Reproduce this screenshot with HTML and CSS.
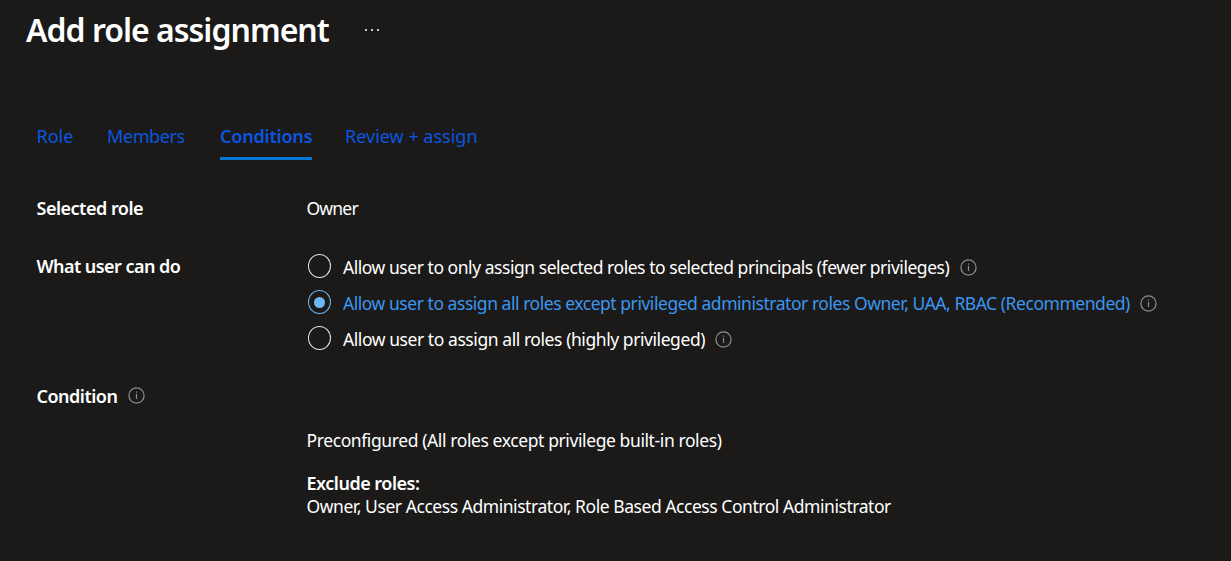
FILE: index.html
```html
<!DOCTYPE html>
<html lang="en">
<head>
<meta charset="utf-8">
<title>Add role assignment</title>
<link rel="stylesheet" href="styles.css">
</head>
<body>
<svg class="defs" width="0" height="0" aria-hidden="true">
  <symbol id="info" viewBox="0 0 17 17">
    <circle cx="8.5" cy="8.5" r="7.6" fill="none" stroke="currentColor" stroke-width="1.2"/>
    <path d="M7.9 7h1.2v5H7.9zM7.9 4.4h1.2v1.4H7.9z" fill="currentColor"/>
  </symbol>
</svg>
<header class="header">
  <h1 class="title">Add role assignment</h1>
  <svg class="more" viewBox="0 0 14 2"><path d="M0 0h2v2H0zM6 0h2v2H6zM12 0h2v2h-2z" fill="currentColor"/></svg>
</header>
<nav class="tabs">
  <a class="tab tab-role">Role</a>
  <a class="tab tab-members">Members</a>
  <a class="tab tab-active">Conditions</a>
  <a class="tab tab-review">Review + assign</a>
</nav>
<main class="form">
  <section class="row row-role">
    <h2 class="label label-role">Selected role</h2>
    <p class="value value-owner">Owner</p>
  </section>
  <section class="row row-options">
    <h2 class="label label-what">What user can do</h2>
    <div class="options">
      <div class="option">
        <span class="radio"></span>
        <span class="option-text text-one">Allow user to only assign selected roles to selected principals (fewer privileges)</span>
        <svg class="info"><use href="#info"/></svg>
      </div>
      <div class="option option-selected">
        <span class="radio"></span>
        <span class="option-text text-two">Allow user to assign all roles except privileged administrator roles Owner, UAA, RBAC (Recommended)</span>
        <svg class="info"><use href="#info"/></svg>
      </div>
      <div class="option">
        <span class="radio"></span>
        <span class="option-text text-three">Allow user to assign all roles (highly privileged)</span>
        <svg class="info"><use href="#info"/></svg>
      </div>
    </div>
  </section>
  <section class="condition">
    <h2 class="label label-condition">Condition</h2>
    <svg class="info"><use href="#info"/></svg>
  </section>
  <section class="details">
    <p class="value value-pre">Preconfigured (All roles except privilege built-in roles)</p>
    <h3 class="label label-exclude">Exclude roles:</h3>
    <p class="value value-roles">Owner, User Access Administrator, Role Based Access Control Administrator</p>
  </section>
</main>
</body>
</html>
```
FILE: styles.css
```css
* { box-sizing: border-box; }
body {
  margin: 0;
  height: 561px;
  overflow: hidden;
  background: #1b1a19;
  color: #fff;
  font: 18px/24px "Segoe UI", "Noto Sans", sans-serif;
  white-space: nowrap;
}
h1, h2, h3, p { margin: 0; font-size: inherit; }
.defs { position: absolute; }
.header { display: flex; height: 60px; padding: 9px 0 0 26px; }
.title { width: 303px; font-size: 32px; line-height: 42px; font-weight: 600; letter-spacing: -0.99px; }
.more { width: 14px; height: 2px; margin: 20px 0 0 36px; color: #d0d0d0; }
.tabs { display: flex; height: 100px; padding: 64px 0 0 36.5px; color: #0a56e0; }
.tab { height: 36px; letter-spacing: 0; }
.tab-role { width: 70.5px; }
.tab-members { width: 113px; letter-spacing: -0.4px; }
.tab-active { width: 92px; margin-right: 33px; font-weight: 600; border-bottom: 3px solid #0078d4; letter-spacing: -0.2px; }
.form { padding: 36px 0 0 36.5px; }
.row { display: grid; grid-template-columns: 270px 1fr; }
.row-role { height: 51px; }
.row-options { height: 137px; }
.label { font-weight: 600; letter-spacing: -0.5px; }
.label-what { padding-top: 7px; letter-spacing: -0.56px; }
.value { font-size: 17.5px; letter-spacing: -0.4px; }
.value-owner { letter-spacing: -0.8px; }
.value-roles { letter-spacing: -0.45px; }
.options { padding-top: 1px; }
.option { display: flex; align-items: center; height: 36px; }
.radio {
  display: flex; align-items: center; justify-content: center;
  width: 23px; height: 24px; margin: 0 12px 0 1.5px;
  border: 1px solid #e8e8e8; border-radius: 50%;
}
.option-text { padding-top: 1px; font-size: 17.5px; letter-spacing: -0.46px; }
.text-three { letter-spacing: -0.43px; }
.info { flex: none; width: 17px; height: 17px; margin: 3px 0 0 10.3px; color: #8f8d8b; }
.option-selected .radio { border-color: #6cb8f6; }
.option-selected .radio::after { content: ""; width: 11px; height: 11px; border-radius: 50%; background: #6cb8f6; }
.option-selected .option-text { color: #3a96f0; }
.condition { display: flex; align-items: center; height: 24px; }
.condition .info { margin: 0 0 1px 10.8px; }
.details { padding: 20px 0 0 270px; }
.label-exclude { height: 23px; margin-top: 19px; }
```
